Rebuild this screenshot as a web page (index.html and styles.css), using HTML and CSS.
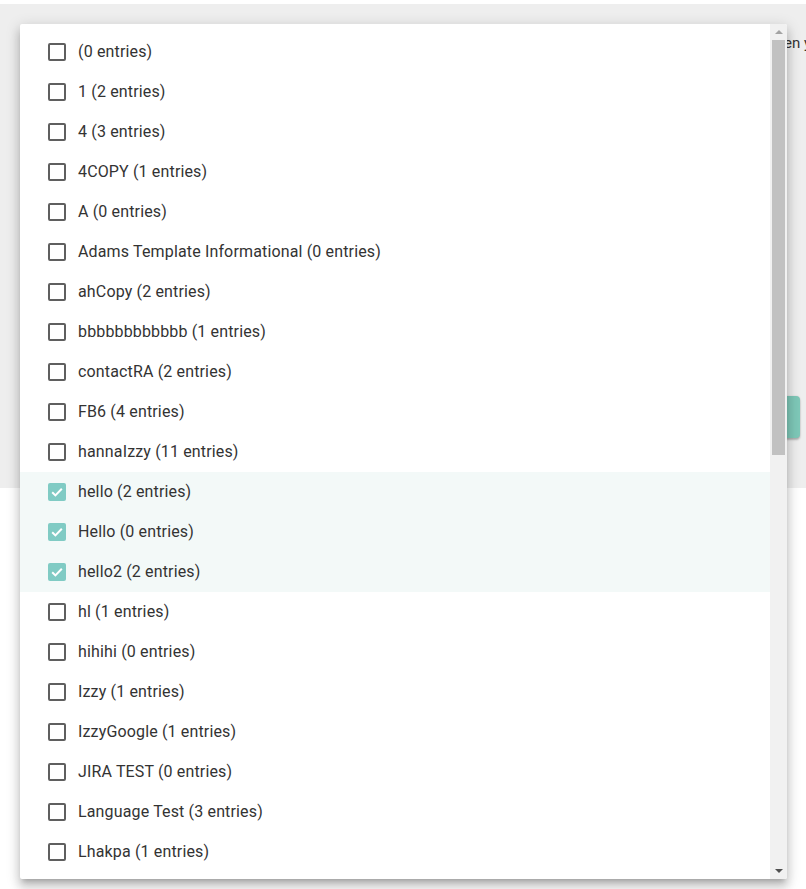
FILE: index.html
```html
<!DOCTYPE html>
<html>
<head>
<meta charset="utf-8">
<link rel="stylesheet" href="styles.css">
</head>
<body>
<div class="backdrop">
  <p class="hint">en you</p>
  <div class="btn-row"><button class="btn">Export</button></div>
</div>
<div class="panel">
  <ul class="list">
    <li class="opt"><span class="box"></span><span class="label">(0 entries)</span></li>
    <li class="opt"><span class="box"></span><span class="label">1 (2 entries)</span></li>
    <li class="opt"><span class="box"></span><span class="label">4 (3 entries)</span></li>
    <li class="opt"><span class="box"></span><span class="label">4COPY (1 entries)</span></li>
    <li class="opt"><span class="box"></span><span class="label">A (0 entries)</span></li>
    <li class="opt"><span class="box"></span><span class="label">Adams Template Informational (0 entries)</span></li>
    <li class="opt"><span class="box"></span><span class="label">ahCopy (2 entries)</span></li>
    <li class="opt"><span class="box"></span><span class="label">bbbbbbbbbbbb (1 entries)</span></li>
    <li class="opt"><span class="box"></span><span class="label">contactRA (2 entries)</span></li>
    <li class="opt"><span class="box"></span><span class="label">FB6 (4 entries)</span></li>
    <li class="opt"><span class="box"></span><span class="label">hannaIzzy (11 entries)</span></li>
    <li class="opt checked"><span class="box"><svg viewBox="0 0 18 18" width="18" height="18"><path d="M4.2 9.2l3.2 3.2 6.4-6.6" fill="none" stroke="#fff" stroke-width="2"/></svg></span><span class="label">hello (2 entries)</span></li>
    <li class="opt checked"><span class="box"><svg viewBox="0 0 18 18" width="18" height="18"><path d="M4.2 9.2l3.2 3.2 6.4-6.6" fill="none" stroke="#fff" stroke-width="2"/></svg></span><span class="label">Hello (0 entries)</span></li>
    <li class="opt checked"><span class="box"><svg viewBox="0 0 18 18" width="18" height="18"><path d="M4.2 9.2l3.2 3.2 6.4-6.6" fill="none" stroke="#fff" stroke-width="2"/></svg></span><span class="label">hello2 (2 entries)</span></li>
    <li class="opt"><span class="box"></span><span class="label">hl (1 entries)</span></li>
    <li class="opt"><span class="box"></span><span class="label">hihihi (0 entries)</span></li>
    <li class="opt"><span class="box"></span><span class="label">Izzy (1 entries)</span></li>
    <li class="opt"><span class="box"></span><span class="label">IzzyGoogle (1 entries)</span></li>
    <li class="opt"><span class="box"></span><span class="label">JIRA TEST (0 entries)</span></li>
    <li class="opt"><span class="box"></span><span class="label">Language Test (3 entries)</span></li>
    <li class="opt"><span class="box"></span><span class="label">Lhakpa (1 entries)</span></li>
  </ul>
  <div class="scrollbar">
    <span class="arrow up"></span>
    <span class="thumb"></span>
    <span class="track-rest"></span>
    <span class="arrow down"></span>
  </div>
</div>
</body>
</html>
```

FILE: styles.css
```css
html, body {
  margin: 0;
  padding: 0;
  background: #ffffff;
  font-family: Roboto, "Liberation Sans", Arial, sans-serif;
  overflow: hidden;
}

.backdrop {
  margin-top: 4px;
  height: 484px;
  background: #eeeeee;
  overflow: hidden;
}

.hint {
  margin: 0;
  padding: 29px 0 0 784px;
  font-size: 15px;
  line-height: 20px;
  color: #333333;
  white-space: nowrap;
}

.btn-row {
  padding: 343px 0 0 690px;
}

.btn {
  width: 110px;
  height: 42px;
  border: none;
  border-radius: 4px;
  background: #7ec8b8;
  color: #fff;
  font-family: inherit;
  font-size: 14px;
  box-shadow: 0 2px 2px rgba(0,0,0,0.24), 0 0 2px rgba(0,0,0,0.12);
}

.panel {
  position: absolute;
  left: 20px;
  top: 24px;
  width: 767px;
  height: 855px;
  background: #ffffff;
  border-radius: 2px;
  display: flex;
  overflow: hidden;
  box-shadow: 0 5px 5px -3px rgba(0,0,0,0.2), 0 8px 10px 1px rgba(0,0,0,0.14), 0 3px 14px 2px rgba(0,0,0,0.12);
}

.list {
  flex: 1;
  list-style: none;
  margin: 0;
  padding: 8px 0 0 0;
  overflow: hidden;
}

.opt {
  height: 40px;
  display: flex;
  align-items: center;
  padding-left: 28px;
  gap: 12px;
}

.opt.checked {
  background: #f3f9f8;
}

.box {
  width: 18px;
  height: 18px;
  box-sizing: border-box;
  border: 2px solid #5f5f5f;
  border-radius: 2px;
  flex: none;
  display: flex;
  align-items: center;
  justify-content: center;
}

.checked .box {
  border: none;
  background: #80cbc4;
}

.label {
  font-size: 16px;
  letter-spacing: 0.15px;
  color: #333333;
  line-height: 20px;
  white-space: nowrap;
}

.scrollbar {
  width: 17px;
  flex: none;
  background: #f1f1f1;
  display: flex;
  flex-direction: column;
  align-items: center;
}

.arrow {
  height: 16px;
  width: 17px;
  flex: none;
  display: flex;
  align-items: center;
  justify-content: center;
}

.arrow::before {
  content: "";
  width: 0;
  height: 0;
  border-left: 4px solid transparent;
  border-right: 4px solid transparent;
}

.arrow.up::before {
  border-bottom: 4px solid #a3a3a3;
}

.arrow.down::before {
  border-top: 4px solid #505050;
}

.thumb {
  width: 13px;
  height: 415px;
  flex: none;
  background: #c1c1c1;
}

.track-rest {
  flex: 1;
}
```
